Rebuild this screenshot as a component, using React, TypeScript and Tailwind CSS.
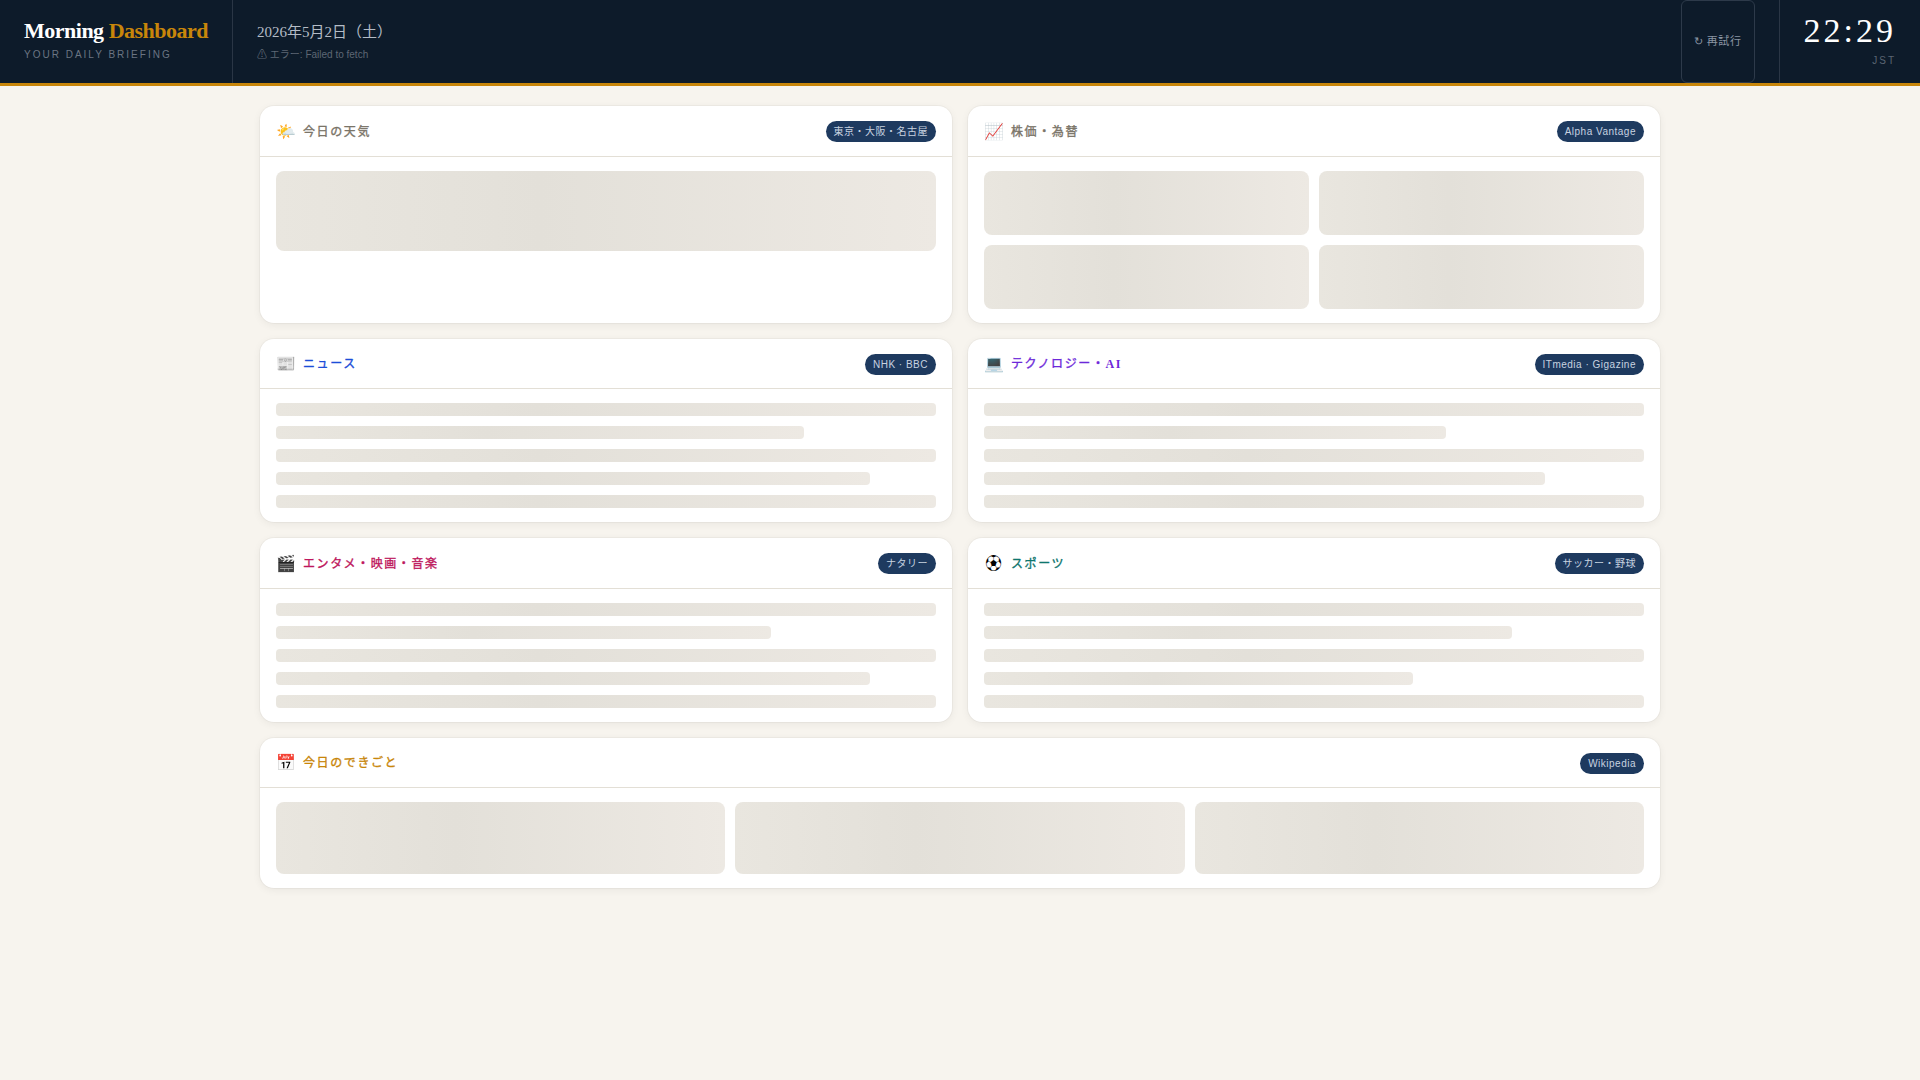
const SERIF = "font-['Liberation_Serif','Noto_Sans_CJK_JP',serif]";
const SANS = "font-['Liberation_Sans','Noto_Sans_CJK_JP',sans-serif]";

const shimmer = "bg-[linear-gradient(90deg,#e9e6df_0%,#e3e0d9_40%,#ede9e3_100%)]";

const Block = ({ className }: { className: string }) => (
  <div className={`${shimmer} rounded-lg ${className}`} />
);

const Lines = ({ widths }: { widths: number[] }) => (
  <div className="flex flex-col gap-[10px]">
    {widths.map((width, i) => (
      <div
        key={i}
        className={`${shimmer} h-[13px] rounded`}
        style={{ width: `${width}%` }}
      />
    ))}
  </div>
);

type CardProps = {
  icon: string;
  title: React.ReactNode;
  titleColor: string;
  badge: string;
  className?: string;
  children: React.ReactNode;
};

const Card = ({ icon, title, titleColor, badge, className = "", children }: CardProps) => (
  <section
    className={`overflow-hidden rounded-[14px] bg-white shadow-[0_0_0_1px_rgba(0,0,0,0.03),0_2px_8px_rgba(0,0,0,0.06)] ${className}`}
  >
    <header className="flex h-[50.5px] items-center justify-between border-b border-[#e3dfd6] px-4 pt-0.5">
      <div className="flex items-center gap-2">
        <span className="w-[19px] text-center text-base leading-none">{icon}</span>
        <h2 className={`${SERIF} text-xs font-normal tracking-[1.6px] [-webkit-text-stroke:0.35px] ${titleColor}`}>
          {title}
        </h2>
      </div>
      <span
        className={`${SANS} rounded-full bg-[#1e3a5f] px-2 py-[3px] text-[10px] leading-[15px] tracking-[0.05em] text-[#c8d3e0]`}
      >
        {badge}
      </span>
    </header>
    <div className="px-4 py-[14px]">{children}</div>
  </section>
);

const App = () => {
  return (
    <div className={`${SANS} min-h-screen bg-[#f7f4ee]`}>
      <header className="flex h-[86px] items-stretch border-b-[3px] border-[#c8860a] bg-[#0d1b2a]">
        <div className="flex flex-col justify-center border-r border-[#2a3645] px-6">
          <h1 className={`${SERIF} text-[22px] leading-5 font-bold tracking-[-0.5px] text-white`}>
            Morning <span className="text-[#c8860a]">Dashboard</span>
          </h1>
          <p className="mt-1.5 text-[10px] leading-4 tracking-[0.2em] text-[#6b7583]">
            YOUR DAILY BRIEFING
          </p>
        </div>
        <div className="flex flex-1 flex-col justify-center px-6">
          <div className={`${SERIF} text-[15px] leading-6 text-[#b4bcc6]`}>2026年5月2日（土）</div>
          <div className="mt-[3px] text-[10px] leading-4 text-[#5d6774]">⚠ エラー: Failed to fetch</div>
        </div>
        <button className="mr-6 w-[74px] rounded-md border border-[#2d3a4a] text-[11px] tracking-[0.05em] text-[#8a95a3]">
          ↻ 再試行
        </button>
        <div className="flex flex-col items-end justify-center border-l border-[#2a3645] px-6">
          <div className={`${SERIF} text-[34px] leading-8 tracking-[3px] text-white`}>22:29</div>
          <div className="mt-[6px] text-[10px] leading-4 tracking-[0.2em] text-[#5a6572]">JST</div>
        </div>
      </header>

      <main className="mx-auto grid max-w-[1400px] grid-cols-2 gap-4 pt-5">
        <Card icon="🌤️" title="今日の天気" titleColor="text-[#7a7468]" badge="東京・大阪・名古屋">
          <Block className="h-20" />
        </Card>
        <Card icon="📈" title="株価・為替" titleColor="text-[#7a7468]" badge="Alpha Vantage">
          <div className="grid grid-cols-2 gap-[10px]">
            <Block className="h-16" />
            <Block className="h-16" />
            <Block className="h-16" />
            <Block className="h-16" />
          </div>
        </Card>
        <Card icon="📰" title="ニュース" titleColor="text-[#1d4ed8]" badge="NHK · BBC">
          <Lines widths={[100, 80, 100, 90, 100]} />
        </Card>
        <Card
          icon="💻"
          title={
            <>
              テクノロジー・<span className="font-bold [-webkit-text-stroke:0]">AI</span>
            </>
          }
          titleColor="text-[#6d28d9]"
          badge="ITmedia · Gigazine"
        >
          <Lines widths={[100, 70, 100, 85, 100]} />
        </Card>
        <Card icon="🎬" title="エンタメ・映画・音楽" titleColor="text-[#be185d]" badge="ナタリー">
          <Lines widths={[100, 75, 100, 90, 100]} />
        </Card>
        <Card icon="⚽" title="スポーツ" titleColor="text-[#0f766e]" badge="サッカー・野球">
          <Lines widths={[100, 80, 100, 65, 100]} />
        </Card>
        <Card icon="📅" title="今日のできごと" titleColor="text-[#c8860a]" badge="Wikipedia" className="col-span-2">
          <div className="grid grid-cols-3 gap-[10px]">
            <Block className="h-[72px]" />
            <Block className="h-[72px]" />
            <Block className="h-[72px]" />
          </div>
        </Card>
      </main>
    </div>
  );
};

export default App;
